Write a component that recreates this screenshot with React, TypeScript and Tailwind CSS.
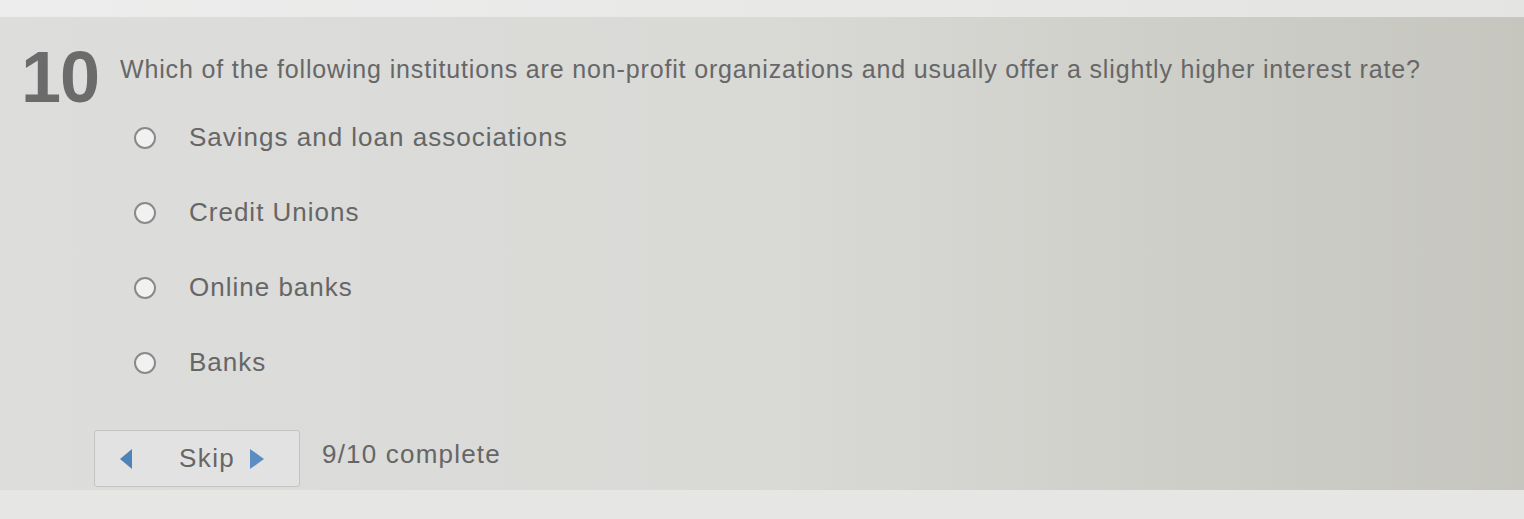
import React from 'react';

const options = ['Savings and loan associations', 'Credit Unions', 'Online banks', 'Banks'];

export default function App() {
  return (
    <div className="w-[1524px] h-[519px] bg-[#e6e6e4] overflow-hidden" style={{ fontFamily: '"Liberation Sans", Arial, sans-serif' }}>
      <div className="h-[17px] bg-gradient-to-r from-[#ededed] to-[#e4e4e2]" />
      <div className="h-[473px] bg-gradient-to-r from-[#dddddc] via-[#d9d9d6] to-[#c6c6bf] pl-[21px] pt-[24px]">
        <div className="flex items-start">
          <div className="w-[99px] text-[72px] leading-[72px] font-bold text-[#6b6b6b] tracking-[-1px]">10</div>
          <div className="pt-[13px] text-[25px] leading-[30px] tracking-[0.85px] text-[#676767]">
            Which of the following institutions are non-profit organizations and usually offer a slightly higher interest rate?
          </div>
        </div>
        <div className="flex flex-col gap-[46px] mt-[10px] pl-[113px]">
          {options.map((o) => (
            <div key={o} className="flex items-center h-[29px]">
              <div className="w-[22px] h-[22px] rounded-full border-2 border-[#8a8a8a] bg-[#f1f1f1]" />
              <span className="ml-[33px] text-[26px] tracking-[1px] text-[#666]">{o}</span>
            </div>
          ))}
        </div>
        <div className="flex items-center mt-[53px] ml-[73px]">
          <div className="w-[206px] h-[57px] border border-[#c4c4c4] rounded-[3px] bg-[#e2e2e2] flex items-center pl-[24px]">
            <svg width="14" height="22" viewBox="0 0 14 22">
              <polygon points="13,1 13,21 1,11" fill="#4f82b6" />
            </svg>
            <span className="ml-[46px] text-[26px] tracking-[1.4px] text-[#666]">Skip</span>
            <svg className="ml-[14px]" width="16" height="22" viewBox="0 0 16 22">
              <polygon points="1,1 1,21 15,11" fill="#5b8cc4" />
            </svg>
          </div>
          <span className="ml-[22px] text-[26px] tracking-[1.2px] text-[#666] -mt-[8px]">9/10 complete</span>
        </div>
      </div>
    </div>
  );
}
